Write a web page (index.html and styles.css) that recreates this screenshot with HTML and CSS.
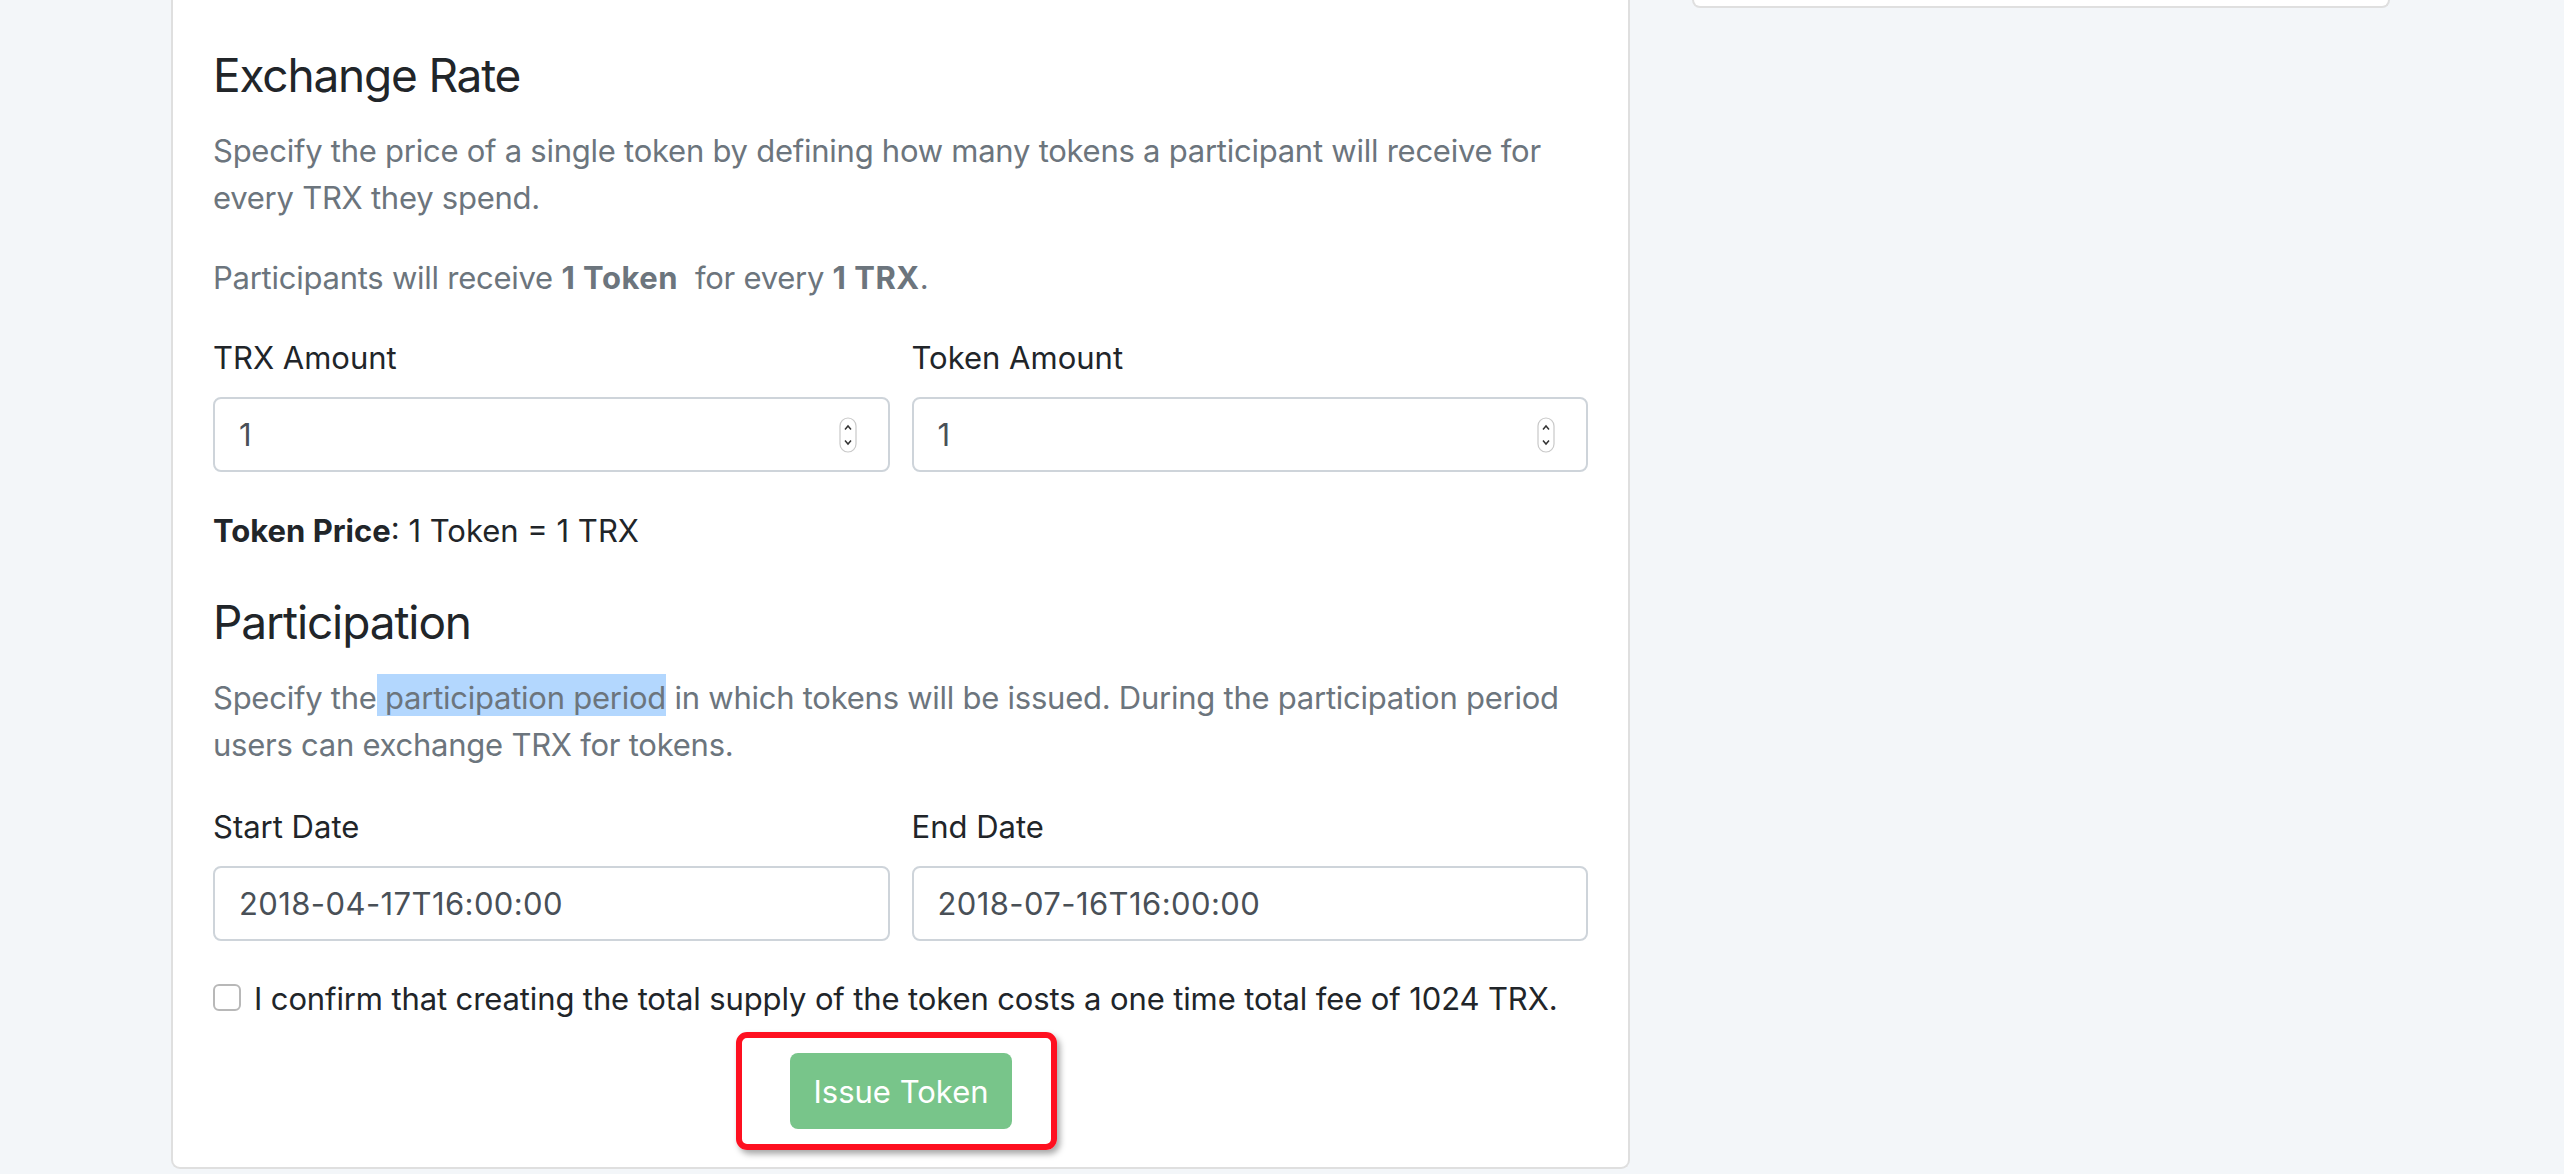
FILE: index.html
```html
<!DOCTYPE html>
<html lang="en">
<head>
<meta charset="utf-8">
<title>Issue Token</title>
<link rel="stylesheet" href="styles.css">
</head>
<body>
<div class="page">
  <main class="card">
    <h4 class="title">Exchange Rate</h4>
    <p class="muted">Specify the price of a single token by defining how many tokens a participant will receive for every TRX they spend.</p>
    <p class="muted">Participants will receive <b>1 Token</b>&nbsp; for every <b>1 TRX</b>.</p>
    <div class="row">
      <div class="field">
        <label class="label" for="trx">TRX Amount</label>
        <div class="box">
          <input class="control" id="trx" type="text" value="1">
          <svg class="spin" width="18" height="36" viewBox="0 0 18 36"><rect x="1" y="1" width="16" height="34" rx="8" fill="#fff" stroke="#c9c9c9" stroke-width="1.2"/><polyline points="6,12.5 9,9 12,12.5" fill="none" stroke="#333" stroke-width="1.5"/><polyline points="6,23.5 9,27 12,23.5" fill="none" stroke="#333" stroke-width="1.5"/></svg>
        </div>
      </div>
      <div class="field">
        <label class="label" for="tok">Token Amount</label>
        <div class="box">
          <input class="control" id="tok" type="text" value="1">
          <svg class="spin" width="18" height="36" viewBox="0 0 18 36"><rect x="1" y="1" width="16" height="34" rx="8" fill="#fff" stroke="#c9c9c9" stroke-width="1.2"/><polyline points="6,12.5 9,9 12,12.5" fill="none" stroke="#333" stroke-width="1.5"/><polyline points="6,23.5 9,27 12,23.5" fill="none" stroke="#333" stroke-width="1.5"/></svg>
        </div>
      </div>
    </div>
    <p class="price"><b>Token Price</b>: 1 Token = 1 TRX</p>

    <h4 class="title title-2">Participation</h4>
    <p class="muted gap-xl">Specify the<span class="sel"> participation period</span> in which tokens will be issued. During the participation period users can exchange TRX for tokens.</p>
    <div class="row row-dates">
      <div class="field">
        <label class="label" for="start">Start Date</label>
        <div class="box">
          <input class="control date" id="start" type="text" value="2018-04-17T16:00:00">
        </div>
      </div>
      <div class="field">
        <label class="label" for="end">End Date</label>
        <div class="box">
          <input class="control date" id="end" type="text" value="2018-07-16T16:00:00">
        </div>
      </div>
    </div>
    <label class="confirm">
      <input class="check" type="checkbox">
      <span>I confirm that creating the total supply of the token costs a one time total fee of 1024 TRX.</span>
    </label>
    <div class="actions">
      <div class="mark">
        <button class="btn" type="button">Issue Token</button>
      </div>
    </div>
  </main>
  <aside class="side"></aside>
</div>
</body>
</html>
```

FILE: styles.css
```css
* { box-sizing: border-box; }

html, body {
  margin: 0;
  padding: 0;
  background: #f3f6f9;
  font-family: Inter, "Liberation Sans", Arial, sans-serif;
  font-size: 31px;
  line-height: 47px;
  color: #212529;
}

.page {
  display: flex;
  align-items: flex-start;
  gap: 62px;
  padding-left: 171px;
  height: 1174px;
  overflow: hidden;
}

.card {
  width: 1459px;
  flex: none;
  background: #fff;
  border: 2px solid #dfdfdf;
  border-top: none;
  border-radius: 0 0 9px 9px;
  padding: 47px 40px 17px;
}

.side {
  width: 698px;
  height: 8px;
  flex: none;
  background: #fff;
  border: 2px solid #dfdfdf;
  border-top: none;
  border-radius: 0 0 10px 10px;
}

.title {
  margin: 0 0 24px;
  font-size: 46px;
  line-height: 56px;
  font-weight: 400;
  letter-spacing: -1.2px;
  color: #212529;
}

.title-2 { letter-spacing: -1.1px; }

p { margin: 0 0 33px; }

.muted {
  color: #6c757d;
  letter-spacing: -0.25px;
}
.muted b {
  font-weight: 700;
  letter-spacing: 0.5px;
}

.gap-xl { margin-bottom: 35px; }

.row {
  display: grid;
  grid-template-columns: 1fr 1fr;
  gap: 22px;
  margin-bottom: 35px;
}

.row-dates { margin-bottom: 34px; }

.field { display: flex; flex-direction: column; }

.label {
  display: block;
  margin-bottom: 16px;
  color: #212529;
}

.box {
  display: flex;
  align-items: center;
  height: 75px;
  border: 2px solid #ced4da;
  border-radius: 8px;
  background: #fff;
  padding: 0 31px 0 24px;
}

.control {
  flex: 1;
  min-width: 0;
  border: none;
  outline: none;
  padding: 0;
  background: transparent;
  font-family: inherit;
  font-size: 31px;
  line-height: 47px;
  color: #495057;
}

.date { letter-spacing: 0.4px; }

.spin { flex: none; display: block; }

.price { margin-bottom: 40px; }
.price b { font-weight: 700; }

.sel {
  background: #b3d7fe;
  box-shadow: 0 -5px 0 #b3d7fe;
}

.confirm {
  display: flex;
  align-items: center;
  gap: 13px;
  color: #212529;
  letter-spacing: -0.12px;
}

.check {
  appearance: none;
  -webkit-appearance: none;
  margin: 0;
  flex: none;
  width: 28px;
  height: 27px;
  border: 2px solid #b8b8b8;
  border-radius: 6px;
  background: #fff;
  position: relative;
  top: -1px;
}

.actions {
  display: flex;
  justify-content: center;
  padding-right: 8px;
  margin-top: 10px;
}

.mark {
  border: 6px solid #fe1020;
  border-radius: 11px;
  padding: 15px 39px 15px 48px;
  box-shadow: 3px 4px 6px rgba(0, 0, 0, 0.35);
}

.btn {
  display: block;
  width: 222px;
  height: 76px;
  border: none;
  border-radius: 8px;
  background: #78c58a;
  color: #fff;
  font-family: inherit;
  font-size: 31px;
  padding: 0;
}
```
